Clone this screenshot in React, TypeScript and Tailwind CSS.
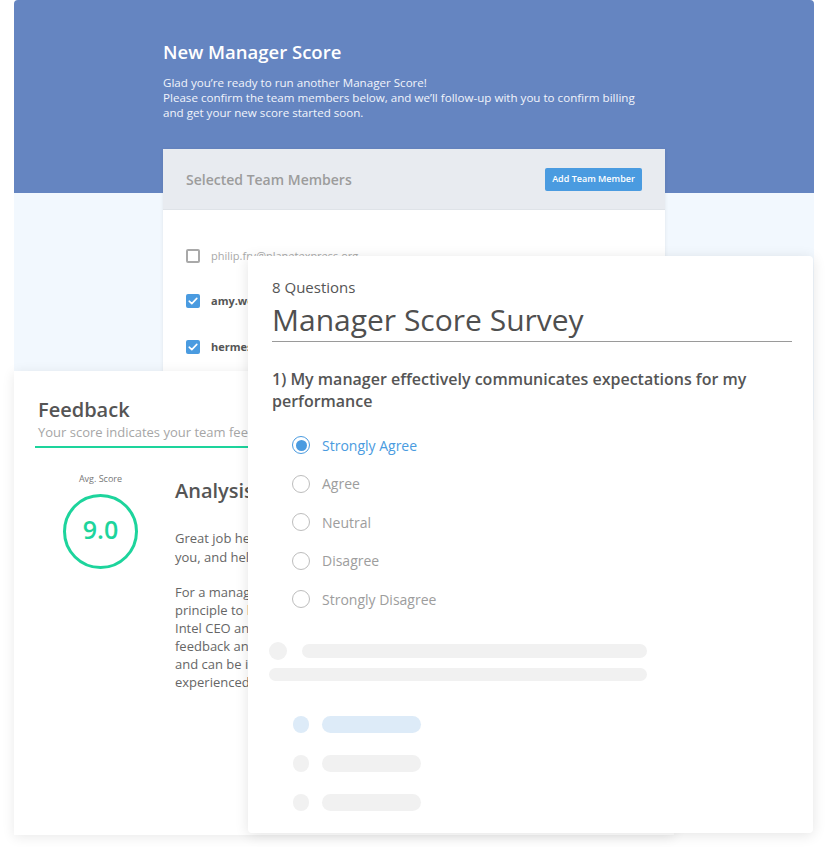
import React from "react";

const font = { fontFamily: '"Open Sans", "Noto Sans", sans-serif' };

const members = [
  { email: "philip.fry@planetexpress.org", checked: false },
  { email: "amy.wong@planetexpress.org", checked: true },
  { email: "hermes.conrad@planetexpress.org", checked: true },
];

const options = ["Strongly Agree", "Agree", "Neutral", "Disagree", "Strongly Disagree"];

function Checkbox({ checked }: { checked: boolean }) {
  if (!checked) {
    return <div className="w-[14px] h-[14px] rounded-[2px] border-2 border-[#a9a9a9] bg-white" />;
  }
  return (
    <div className="w-[14px] h-[14px] rounded-[2px] bg-[#4a9be0] flex items-center justify-center">
      <svg width="10" height="8" viewBox="0 0 10 8" fill="none">
        <path d="M1.2 4.2L3.8 6.6L8.8 1.4" stroke="white" strokeWidth="1.6" strokeLinecap="round" strokeLinejoin="round" />
      </svg>
    </div>
  );
}

function Radio({ selected }: { selected: boolean }) {
  if (selected) {
    return (
      <div className="w-[18px] h-[18px] rounded-full border-[1.5px] border-[#4a9be0] flex items-center justify-center">
        <div className="w-[11px] h-[11px] rounded-full bg-[#4a9be0]" />
      </div>
    );
  }
  return <div className="w-[18px] h-[18px] rounded-full border-[1.5px] border-[#bdbdbd]" />;
}

function BackScreen() {
  return (
    <div className="absolute left-[14px] top-0 w-[800px] h-[420px] bg-[#f2f8fe] rounded-t-[4px] overflow-hidden">
      <div className="h-[193px] bg-[#6585c1]" />
      <div className="absolute left-[149px] top-0 w-[502px]">
        <h1 className="mt-[40px] text-[18.5px] leading-[24px] font-semibold text-white">New Manager Score</h1>
        <p className="mt-[11px] text-[11.6px] leading-[15px] text-[#f1f4fb] whitespace-nowrap">
          Glad you’re ready to run another Manager Score!
          <br />
          Please confirm the team members below, and we’ll follow-up with you to confirm billing
          <br />
          and get your new score started soon.
        </p>
        <div className="mt-[29px] bg-white shadow-[0_1px_4px_rgba(0,0,0,0.08)] h-[260px]">
          <div className="h-[61px] bg-[#e8ebf0] border-b border-[#dfe3e8] flex items-center justify-between px-[23px]">
            <span className="text-[14px] font-semibold text-[#9c9c9c]">Selected Team Members</span>
            <button className="w-[97px] h-[23px] bg-[#4a9be0] rounded-[2px] text-white text-[9px] font-semibold">
              Add Team Member
            </button>
          </div>
          <div className="pt-[23px] px-[23px]">
            {members.map((m) => (
              <div key={m.email} className="h-[45.5px] flex items-center gap-[11px]">
                <Checkbox checked={m.checked} />
                <span
                  className={
                    m.checked
                      ? "text-[11px] font-bold text-[#555]"
                      : "text-[11px] text-[#a9a9a9]"
                  }
                >
                  {m.email}
                </span>
              </div>
            ))}
          </div>
        </div>
      </div>
    </div>
  );
}

function FeedbackCard() {
  const para2 = [
    "For a manager, feedback from your team is an important",
    "principle to learn and grow. Andy Grove, the former",
    "Intel CEO and author of High Output Management, says",
    "feedback and communication are core to great managers",
    "and can be improved by both new and",
    "experienced managers alike.",
  ];
  return (
    <div className="absolute left-[14px] top-[371px] w-[660px] h-[464px] bg-white shadow-[0_2px_12px_rgba(0,0,0,0.09)]">
      <div className="pl-[24px] pt-[26px]">
        <h2 className="text-[20px] leading-[26px] font-semibold text-[#555]">Feedback</h2>
        <p className="text-[13px] leading-[18px] text-[#a6a6a6] whitespace-nowrap">
          Your score indicates your team feels very positive about your management
        </p>
      </div>
      <div className="ml-[21px] mr-[24px] mt-[5px] h-[2px] bg-[#1dd49c]" />
      <div className="flex mt-[24px]">
        <div className="w-[161px] shrink-0 pl-[12px] flex flex-col items-center pt-[1px]">
          <span className="text-[9px] leading-[12px] text-[#777]">Avg. Score</span>
          <div className="mt-[9px] w-[75px] h-[75px] rounded-full border-[3px] border-[#1dd49c] flex items-center justify-center">
            <span className="text-[25px] leading-none font-semibold text-[#1dd49c] -mt-[5px]">9.0</span>
          </div>
        </div>
        <div className="flex-1 whitespace-nowrap">
          <h3 className="mt-[6px] text-[20px] leading-[26px] font-semibold text-[#555]">Analysis</h3>
          <div className="mt-[25px] text-[13px] leading-[18.5px] text-[#666]">
            <p>Great job here! Your team feels that you support</p>
            <p>you, and help them reach their goals.</p>
          </div>
          <div className="mt-[17px] text-[13px] leading-[18px] text-[#666]">
            {para2.map((l) => (
              <p key={l}>{l}</p>
            ))}
          </div>
        </div>
      </div>
    </div>
  );
}

function SurveyCard() {
  return (
    <div className="absolute left-[248px] top-[256px] w-[565px] h-[577px] bg-white rounded-[4px] shadow-[0_2px_14px_rgba(0,0,0,0.11)]">
      <div className="px-[24px] pt-[21px]">
        <p className="text-[15px] leading-[20px] text-[#555]">8 Questions</p>
        <h2 className="mt-[4px] text-[30px] leading-[38px] text-[#4f4f4f] pb-[2px] border-b border-[#9a9a9a] w-[520px]">
          Manager Score Survey
        </h2>
        <p className="mt-[27px] w-[520px] text-[16px] leading-[21.5px] font-semibold text-[#555]">
          1) My manager effectively communicates expectations for my performance
        </p>
        <div className="mt-[14px] pl-[20px]">
          {options.map((o, i) => (
            <div key={o} className="h-[38.5px] flex items-center gap-[12px]">
              <Radio selected={i === 0} />
              <span className={i === 0 ? "text-[14px] text-[#4a9be0]" : "text-[14px] text-[#9d9d9d]"}>{o}</span>
            </div>
          ))}
        </div>
      </div>
      <div className="pl-[21px] mt-[23px]">
        <div className="flex items-center gap-[15px]">
          <div className="w-[18px] h-[18px] rounded-full bg-[#f1f1f1]" />
          <div className="w-[345px] h-[14px] rounded-full bg-[#f1f1f1]" />
        </div>
        <div className="mt-[8px] w-[378px] h-[13px] rounded-full bg-[#f1f1f1]" />
        <div className="mt-[24px] pl-[24px]">
          {[0, 1, 2].map((i) => (
            <div key={i} className="h-[39px] flex items-center gap-[13px]">
              <div className={i === 0 ? "w-[16px] h-[17px] rounded-full bg-[#ddebf8]" : "w-[16px] h-[17px] rounded-full bg-[#f1f1f1]"} />
              <div className={i === 0 ? "w-[99px] h-[17px] rounded-full bg-[#ddebf8]" : "w-[99px] h-[17px] rounded-full bg-[#f1f1f1]"} />
            </div>
          ))}
        </div>
      </div>
    </div>
  );
}

export default function App() {
  return (
    <div className="relative w-[827px] h-[847px] bg-white overflow-hidden" style={font}>
      <BackScreen />
      <FeedbackCard />
      <SurveyCard />
    </div>
  );
}
